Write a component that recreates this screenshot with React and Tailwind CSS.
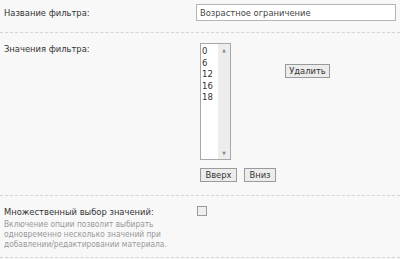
export default function App() {
  const values = ["0", "6", "12", "16", "18"];

  return (
    <div className="w-[400px] h-[259px] bg-[#f8f8f8] text-[#333] overflow-hidden" style={{ fontFamily: '"DejaVu Sans Condensed", "DejaVu Sans", sans-serif' }}>
      {/* название */}
      <div className="grid grid-cols-[196px_1fr] pt-[4px] h-[33px] border-b border-dashed border-[#d4d4d4]">
        <div className="pl-[4px] text-[9.3px] leading-[18px]">Название фильтра:</div>
        <div className="pr-[4px]">
          <div className="h-[17px] border border-[#b5b5b5] bg-white px-[3px] text-[9.3px] leading-[15px] text-[#444]">
            Возрастное ограничение
          </div>
        </div>
      </div>

      {/* значения */}
      <div className="grid grid-cols-[196px_1fr] pt-[10px] h-[163px] border-b border-dashed border-[#d4d4d4]">
        <div className="pl-[4px] text-[9.3px] leading-[8px] pt-[2px]">Значения фильтра:</div>
        <div className="pl-[4px]">
          <div className="flex">
            <div className="w-[31px] h-[117px] border border-[#a8a8a8] bg-white flex">
              <div className="flex-1 pl-[1px] pt-[1px] text-[9.5px] leading-[11.5px]">
                {values.map((v) => (
                  <div key={v}>{v}</div>
                ))}
              </div>
              <div className="w-[12px] bg-[#ededed] flex flex-col justify-between items-center py-[3px] text-[5px] leading-[6px] text-[#888]">
                <span>▲</span>
                <span>▼</span>
              </div>
            </div>
            <button className="ml-[54px] mt-[21px] h-[14px] w-[45px] border border-[#9a9a9a] bg-[#ececec] text-[9.3px] leading-[12px] text-[#333]">
              Удалить
            </button>
          </div>
          <div className="flex gap-[7px] mt-[8px]">
            <button className="h-[14px] w-[37px] border border-[#9a9a9a] bg-[#ececec] text-[9.3px] leading-[12px] text-[#333]">
              Вверх
            </button>
            <button className="h-[14px] w-[32px] border border-[#9a9a9a] bg-[#ececec] text-[9.3px] leading-[12px] text-[#333]">
              Вниз
            </button>
          </div>
        </div>
      </div>

      {/* множественный выбор */}
      <div className="grid grid-cols-[196px_1fr] pt-[10px] h-[62px] border-b border-dashed border-[#d4d4d4]">
        <div className="pl-[4px]">
          <div className="text-[9.3px] leading-[11px]">Множественный выбор значений:</div>
          <div className="mt-[2px] w-[175px] text-[8.3px] leading-[10px] text-[#999]">
            Включение опции позволит выбирать одновременно несколько значений при добавлении/редактировании материала.
          </div>
        </div>
        <div className="pl-[1px]">
          <div className="w-[10px] h-[10px] border border-[#9a9a9a] bg-[#efefef]" />
        </div>
      </div>
    </div>
  );
}
